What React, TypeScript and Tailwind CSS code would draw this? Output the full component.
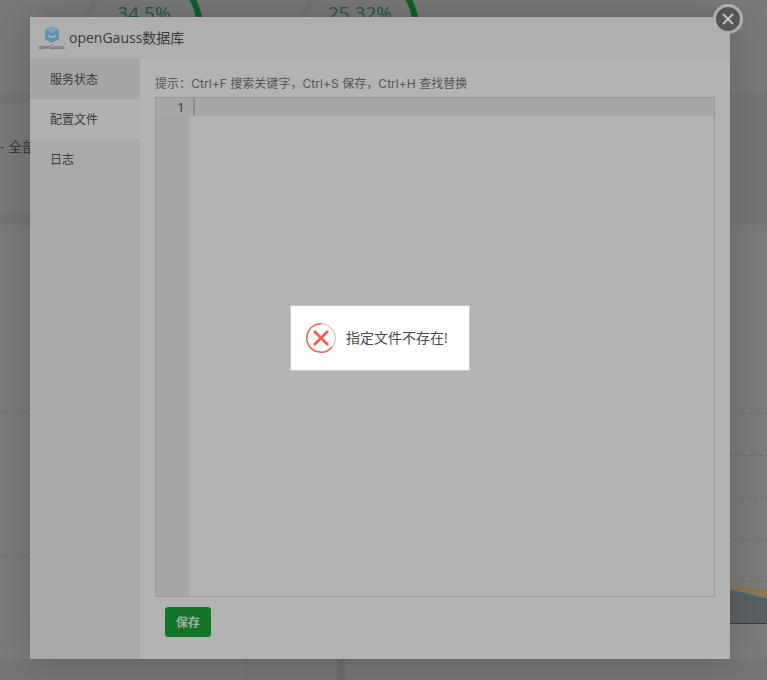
const FONT = "font-['Open_Sans','Noto_Sans_CJK_SC',sans-serif]";

function Ring({ value }: { value: string }) {
  return (
    <div className="relative h-[93px] w-[118px]">
      <svg className="h-[93px] w-[118px]" viewBox="0 0 118 93" fill="none">
        <circle cx="59" cy="27" r="56" stroke="#747474" strokeWidth="6" />
        <path d="M 104 -6 A 56 56 0 0 1 59 83" stroke="#0f6226" strokeWidth="6" />
      </svg>
      <div className="absolute inset-x-0 top-[-1px] text-center text-[19px] leading-7 text-[#1f5a35]">{value}</div>
    </div>
  );
}

function Backdrop() {
  return (
    <div className="flex h-[680px] flex-col bg-[#767676]">
      <div className="flex h-[93px] bg-[#7a7a7a] pl-[85px]">
        <Ring value="34.5%" />
        <div className="ml-[98px]">
          <Ring value="25.32%" />
        </div>
      </div>
      <div className="mt-[11px] h-[109px] w-[700px] bg-[#7a7a7a] pt-[33px] text-[14px] leading-5 text-[#3a3a3a]">
        <span className="whitespace-nowrap">- 全部</span>
      </div>
      <div className="mt-[12px] flex h-[434px] bg-[#7c7c7c]">
        <div className="w-[32px]">
          <div className="mt-[186px] border-t border-dashed border-[#6e6e6e]" />
          <div className="mt-[143px] border-t border-dashed border-[#6e6e6e]" />
        </div>
        <div className="flex flex-1 flex-col">
          <div className="mt-[188px] border-t border-dashed border-[#6e6e6e]" />
          <div className="mt-[41px] border-t border-dashed border-[#6e6e6e]" />
          <div className="mt-[41px] border-t border-dashed border-[#6e6e6e]" />
          <div className="mt-[41px] border-t border-dashed border-[#6e6e6e]" />
          <div className="mt-[41px] border-t border-dashed border-[#6e6e6e]" />
          <div className="mt-[3px] flex justify-end">
            <svg width="37" height="38" viewBox="0 0 37 38">
              <path d="M0 0 L37 5 V38 H0 Z" fill="#8f7650" />
              <path d="M0 5 L37 14 V38 H0 Z" fill="#5b6163" />
              <path d="M0 5 L37 14" stroke="#2f6ea8" strokeWidth="1" fill="none" />
            </svg>
          </div>
          <div className="h-px bg-[#3a3a3a]" />
        </div>
      </div>
      <div className="flex flex-1">
        <div className="ml-[33px] w-[215px] border-x border-dashed border-[#6e6e6e]" />
        <div className="ml-[89px] w-[8px] bg-[#6c6c6c]" />
      </div>
    </div>
  );
}

function EditorPanel() {
  return (
    <div className="flex flex-1 flex-col bg-[#b3b3b3] px-[15px]">
      <div className="h-[38px] pt-[16px] font-['Inter','Noto_Sans_CJK_SC',sans-serif] text-[12px] leading-[18px] tracking-[0.05px] text-[#555]">
        提示：Ctrl+F 搜索关键字，Ctrl+S 保存，Ctrl+H 查找替换
      </div>
      <div className="flex h-[500px] border border-[#999] bg-[#b3b3b3]">
        <div className="w-[33px] bg-[#a6a6a6]">
          <div className="h-[18px] bg-[#a7a7a7] pr-[6px] pt-[1px] text-right font-['Inter',sans-serif] text-[12px] leading-[18px] text-[#3a3a3a]">1</div>
        </div>
        <div className="flex-1">
          <div className="h-[18px] bg-[#a7a7a7] pl-[4px]">
            <div className="h-[18px] w-[2px] bg-[#8c8c8c]" />
          </div>
        </div>
      </div>
      <div className="mt-[10px] pl-[10px]">
        <button className="h-[30px] w-[46px] rounded-[3px] bg-[#14752a] pt-[1px] text-[12px] font-bold text-[#a0b1a3]">保存</button>
      </div>
    </div>
  );
}

function Modal() {
  return (
    <div className="absolute left-[30px] top-[17px] flex h-[642px] w-[700px] flex-col bg-[#b3b3b3] shadow-[0_0_40px_rgba(0,0,0,0.2)]">
      <div className="flex h-[42px] items-center border-b border-[#a9a9a9] bg-[#afafaf] pl-[9px] text-[14px] text-[#3a3a3a]">
        <div className="mr-[5px] flex h-[24px] w-[25px] flex-col items-center">
          <svg width="16" height="17" viewBox="0 0 16 17">
            <path d="M8 0 L15 3.5 V13 L8 17 L1 13 V3.5 Z" fill="#5e93aa" />
            <path d="M1 3.5 L8 7 L15 3.5 L8 0 Z" fill="#78a5b8" />
            <path d="M4 9.5 L8 11.5 L12 9.5" stroke="#95b7c6" strokeWidth="1.4" fill="none" />
          </svg>
          <span className="mt-[1px] whitespace-nowrap text-[5px] leading-[6px] text-[#444]">openGauss</span>
        </div>
        openGauss数据库
      </div>
      <div className="flex flex-1">
        <div className="w-[110px] bg-[#a9a9a9] text-[12px] text-[#3a3a3a]">
          <div className="flex h-[40px] items-center bg-[#a5a5a5] pl-[20px] pt-[2px]">服务状态</div>
          <div className="flex h-[40px] items-center bg-[#b0b0b0] pl-[20px] pt-[2px]">配置文件</div>
          <div className="flex h-[40px] items-center pl-[20px] pt-[2px]">日志</div>
        </div>
        <EditorPanel />
      </div>
      <div className="absolute right-[-13px] top-[-13px] flex h-[30px] w-[30px] items-center justify-center rounded-full border-[3px] border-[#b0b0b0] bg-[#555]">
        <svg width="14" height="14" viewBox="0 0 14 14" stroke="#c4c4c4" strokeWidth="2" fill="none">
          <path d="M2 2 L12 12 M12 2 L2 12" />
        </svg>
      </div>
    </div>
  );
}

function Toast() {
  return (
    <div className="absolute left-[290px] top-[305px] flex h-[66px] w-[180px] items-center rounded-[2px] border border-[#c8c8c8] bg-white pb-[1px] pl-[15px] text-[14px] text-[#4a4a4a]">
      <svg className="mr-[10px]" width="30" height="30" viewBox="0 0 30 30" fill="none" stroke="#e9604e">
        <path d="M15 0.8 A14.2 14.2 0 1 0 26 24" strokeWidth="1.5" />
        <path d="M26 24 A14.2 14.2 0 0 0 15 0.8" strokeWidth="1" opacity="0.55" />
        <path d="M8 8 L22 22 M22 8 L8 22" strokeWidth="2.8" />
      </svg>
      <span className="whitespace-nowrap">指定文件不存在!</span>
    </div>
  );
}

export default function App() {
  return (
    <div className={`relative h-[680px] overflow-hidden ${FONT}`}>
      <Backdrop />
      <Modal />
      <Toast />
    </div>
  );
}
